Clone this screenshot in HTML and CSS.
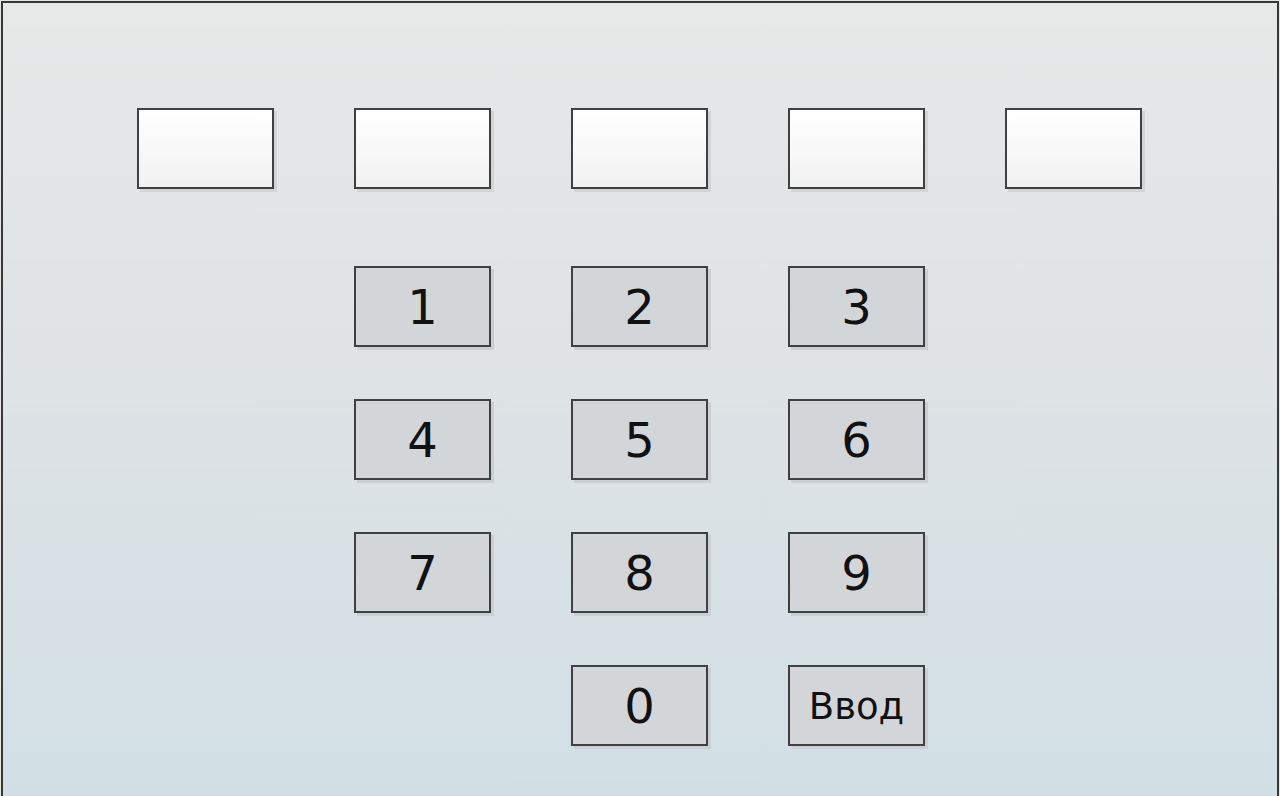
FILE: index.html
```html
<!DOCTYPE html>
<html lang="ru">
<head>
<meta charset="utf-8">
<title>PIN</title>
<link rel="stylesheet" href="styles.css">
</head>
<body>
<div class="frame">
  <div class="slots">
    <div class="slot"></div>
    <div class="slot"></div>
    <div class="slot"></div>
    <div class="slot"></div>
    <div class="slot"></div>
  </div>
  <div class="keypad">
    <div class="key">1</div>
    <div class="key">2</div>
    <div class="key">3</div>
    <div class="key">4</div>
    <div class="key">5</div>
    <div class="key">6</div>
    <div class="key">7</div>
    <div class="key">8</div>
    <div class="key">9</div>
    <div class="key key-zero">0</div>
    <div class="key key-enter">Ввод</div>
  </div>
</div>
</body>
</html>
```
FILE: styles.css
```css
html, body {
  margin: 0;
  padding: 0;
  height: 100%;
  overflow: hidden;
}
body {
  background: #e6e6e6;
  font-family: "DejaVu Sans", sans-serif;
}
.frame {
  box-sizing: border-box;
  margin: 1px 1px 0 1px;
  height: 795px;
  border: 2px solid #383838;
  border-bottom: none;
  background: linear-gradient(to bottom, #e7e8e8 0%, #dfe3e5 45%, #d1dfe5 100%);
  padding: 105px 0 0 134px;
}
.slots {
  display: grid;
  grid-template-columns: repeat(5, 137px);
  column-gap: 80px;
}
.slot {
  box-sizing: border-box;
  height: 81px;
  border: 2px solid #404040;
  background: linear-gradient(to bottom, #ffffff 0%, #f1f1f1 100%);
  box-shadow: 3px 3px 0 #d2d4d6;
}
.keypad {
  display: grid;
  grid-template-columns: repeat(3, 137px);
  grid-auto-rows: 81px;
  column-gap: 80px;
  row-gap: 52px;
  margin: 77px 0 0 217px;
}
.key {
  box-sizing: border-box;
  border: 2px solid #404040;
  background: #d3d6d8;
  box-shadow: 3px 3px 0 #c9cfd2;
  display: flex;
  align-items: center;
  justify-content: center;
  font-size: 48px;
  color: #111;
  line-height: 1;
}
.key-zero {
  grid-column: 2;
}
.key-enter {
  grid-column: 3;
  font-size: 37px;
  padding-top: 2px;
}
```
